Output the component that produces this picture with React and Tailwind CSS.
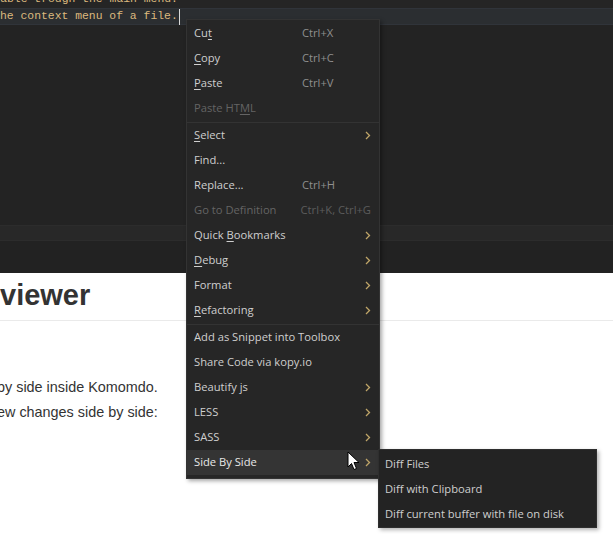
import { Fragment } from 'react';

const menuFont = { fontFamily: '"Open Sans", "Noto Sans", sans-serif' };

const groups = [
  [
    { label: 'Cut', mn: 2, key: 'Ctrl+X' },
    { label: 'Copy', mn: 0, key: 'Ctrl+C' },
    { label: 'Paste', mn: 0, key: 'Ctrl+V' },
    { label: 'Paste HTML', mn: 8, disabled: true },
  ],
  [
    { label: 'Select', mn: 0, sub: true },
    { label: 'Find...' },
    { label: 'Replace...', key: 'Ctrl+H' },
    { label: 'Go to Definition', key: 'Ctrl+K, Ctrl+G', disabled: true },
    { label: 'Quick Bookmarks', mn: 6, sub: true },
    { label: 'Debug', mn: 0, sub: true },
    { label: 'Format', sub: true },
    { label: 'Refactoring', mn: 0, sub: true },
  ],
  [
    { label: 'Add as Snippet into Toolbox' },
    { label: 'Share Code via kopy.io' },
    { label: 'Beautify js', sub: true },
    { label: 'LESS', sub: true },
    { label: 'SASS', sub: true },
    { label: 'Side By Side', sub: true, active: true },
  ],
];

const Label = ({ text, mn }) => {
  if (mn === undefined) return text;
  return (
    <>
      {text.slice(0, mn)}
      <span className="underline underline-offset-2">{text[mn]}</span>
      {text.slice(mn + 1)}
    </>
  );
};

const Chevron = () => (
  <svg width="6" height="9" viewBox="0 0 6 9" className="text-[#bfa568]">
    <polyline points="1,1 4.5,4.5 1,8" fill="none" stroke="currentColor" strokeWidth="1.3" />
  </svg>
);

const MenuItem = ({ item }) => (
  <div
    className={`h-[25px] flex items-center pl-[7px] pr-[8px] ${item.active ? 'bg-[#343434] text-[#e8e8e8]' : ''} ${item.disabled ? 'text-[#646464]' : 'text-[#cfcfcf]'}`}
  >
    <span className="w-[108px] whitespace-nowrap">
      <Label text={item.label} mn={item.mn} />
    </span>
    <span className={`flex-1 whitespace-nowrap ${item.disabled ? 'text-[#5c5c5c]' : 'text-[#8f8f8f]'}`}>{item.key}</span>
    {item.sub && <Chevron />}
  </div>
);

const Pointer = () => (
  <svg width="13" height="20" viewBox="0 0 13 20">
    <path d="M1 1 L1 16 L4.5 12.5 L7 18.5 L9.5 17.5 L7 11.5 L12 11.5 Z" fill="#fff" stroke="#000" strokeWidth="1" strokeLinejoin="round" />
  </svg>
);

export default function App() {
  return (
    <div className="relative w-[613px] h-[534px] overflow-hidden bg-white">
      {/* editor */}
      <div className="h-[273px] bg-[#232323] flex flex-col">
        <div className="text-[11.4px] text-[#dcb97e] leading-[17px] mt-[-9px]">
          <div className="h-[17px] bg-[#252525] whitespace-nowrap ml-[-34px]" style={{ fontFamily: '"Liberation Mono", monospace' }}>
            available trough the main menu.
          </div>
          <div className="h-[17px] bg-[#2b2e31] border-y border-[#30343a] flex items-center whitespace-nowrap" style={{ fontFamily: '"Liberation Mono", monospace' }}>
            <span>he context menu of a file.</span>
            <span className="w-px h-[16px] bg-[#d8d8d8] ml-px" />
          </div>
        </div>
        <div className="flex-1" />
        <div className="h-[16px] bg-[#282828] border-y border-[#2c2c2c]" />
        <div className="h-[32px] bg-[#222222]" />
      </div>

      {/* page */}
      <div className="pt-[4px]" style={{ fontFamily: '"Liberation Sans", Arial, sans-serif' }}>
        <h1 className="text-[29px] leading-[36px] font-bold text-[#333333]">viewer</h1>
        <div className="h-px bg-[#eaeaea] mt-[7px]" />
        <div className="mt-[54px] text-[14.4px] leading-[25px] text-[#333333] whitespace-nowrap">
          <p className="ml-[-3px]">by side inside Komomdo.</p>
          <p className="ml-[-3px]">ew changes side by side:</p>
        </div>
      </div>

      {/* context menu */}
      <div
        className="absolute left-[186px] top-[19px] w-[194px] bg-[#262626] border border-[#333333] pt-[1px] pb-[3px] text-[11.2px] shadow-[2px_2px_4px_rgba(0,0,0,0.35)]"
        style={menuFont}
      >
        {groups.map((g, i) => (
          <Fragment key={i}>
            {i > 0 && <div className="h-px my-[0.5px] bg-[#333333]" />}
            {g.map(item => (
              <MenuItem key={item.label} item={item} />
            ))}
          </Fragment>
        ))}
      </div>

      {/* submenu */}
      <div
        className="absolute left-[378px] top-[449px] w-[219px] bg-[#232323] border border-[#2e2e2e] pt-[2px] text-[11.2px] text-[#cfcfcf] shadow-[2px_2px_4px_rgba(0,0,0,0.3)]"
        style={menuFont}
      >
        {['Diff Files', 'Diff with Clipboard', 'Diff current buffer with file on disk'].map(t => (
          <div key={t} className="h-[25px] flex items-center pl-[6px] whitespace-nowrap">{t}</div>
        ))}
      </div>

      <div className="absolute left-[347px] top-[451px]">
        <Pointer />
      </div>
    </div>
  );
}
